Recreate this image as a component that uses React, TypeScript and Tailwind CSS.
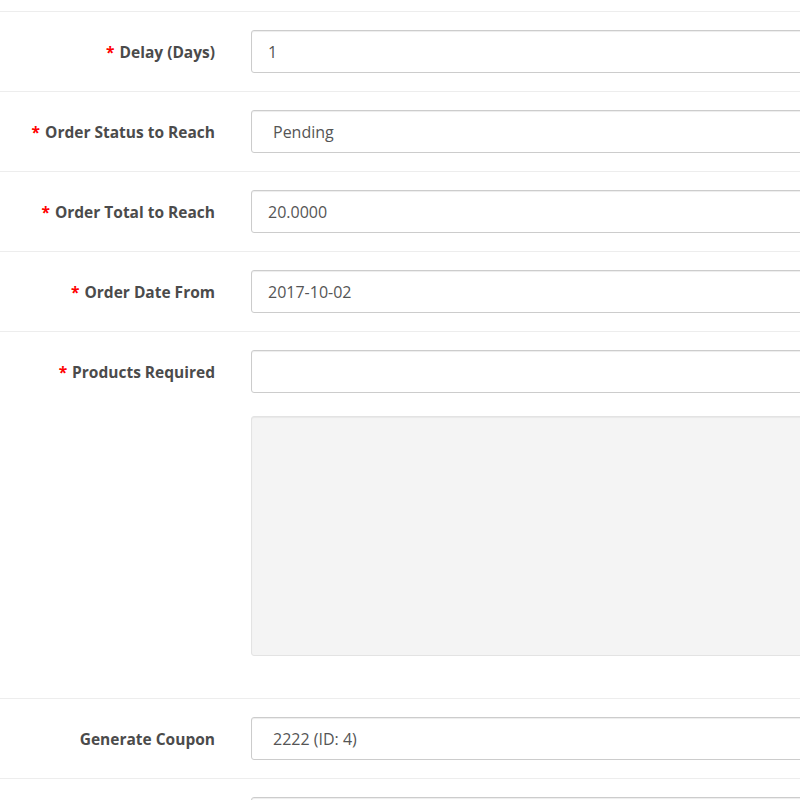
const rows = [
  { label: 'Delay (Days)', value: '1', required: true },
  { label: 'Order Status to Reach', value: 'Pending', required: true, select: true },
  { label: 'Order Total to Reach', value: '20.0000', required: true },
  { label: 'Order Date From', value: '2017-10-02', required: true },
];

function Label({ text, required }: { text: string; required?: boolean }) {
  return (
    <div className="flex h-[43px] w-[215px] shrink-0 items-center justify-end pt-[3px] text-[15.5px] font-bold text-[#4b4b4b]">
      {required && <span className="mr-[5px] text-[#ff0000]">*</span>}
      {text}
    </div>
  );
}

function Field({ value, select }: { value: string; select?: boolean }) {
  return (
    <div
      className={`flex h-[43px] w-[700px] shrink-0 items-center rounded-[3px] border border-[#cccccc] bg-white pt-[1px] text-[16px] text-[#555555] shadow-[inset_0_1px_1px_rgba(0,0,0,0.075)] ${
        select ? 'pl-[21px]' : 'pl-[16px]'
      }`}
    >
      {value}
    </div>
  );
}

export default function App() {
  return (
    <div
      className="h-[800px] w-[800px] overflow-hidden bg-white"
      style={{ fontFamily: '"Open Sans", "Liberation Sans", sans-serif' }}
    >
      <div className="h-[12px] border-b border-[#ededed]" />
      {rows.map((r) => (
        <div key={r.label} className="flex h-[80px] gap-[36px] border-b border-[#ededed] pt-[18px]">
          <Label text={r.label} required={r.required} />
          <Field value={r.value} select={r.select} />
        </div>
      ))}
      <div className="flex h-[367px] gap-[36px] border-b border-[#ededed] pt-[18px]">
        <Label text="Products Required" required />
        <div className="flex flex-col">
          <Field value="" />
          <div className="mt-[23px] h-[240px] w-[700px] rounded-[3px] border border-[#e3e3e3] bg-[#f4f4f4] shadow-[inset_0_1px_1px_rgba(0,0,0,0.05)]" />
        </div>
      </div>
      <div className="flex h-[80px] gap-[36px] border-b border-[#ededed] pt-[18px]">
        <Label text="Generate Coupon" />
        <Field value="2222 (ID: 4)" select />
      </div>
      <div className="flex h-[80px] gap-[36px] pt-[18px]">
        <div className="w-[215px] shrink-0" />
        <Field value="" />
      </div>
    </div>
  );
}
